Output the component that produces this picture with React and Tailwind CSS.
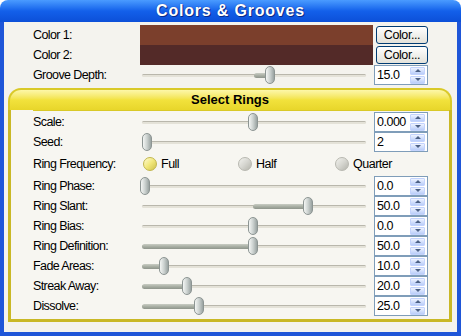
import React from "react";

const font = { fontFamily: "'Liberation Sans', Arial, sans-serif" };

const SpinBox = ({ value, className = "" }) => (
  <div
    className={`flex h-[20px] w-[54px] items-center border border-[#7f9db9] bg-white ${className}`}
  >
    <span className="flex-1 pl-[2px] text-[12.5px] leading-none tracking-[-0.5px] text-black">
      {value}
    </span>
    <div className="mr-[2px] flex flex-col gap-px">
      <div className="flex h-[8px] w-[15px] items-center justify-center rounded-[1px] border border-[#c3d3fd] bg-gradient-to-b from-[#eef3ff] to-[#b9cdf9]">
        <div className="h-0 w-0 border-x-[3px] border-b-[3px] border-x-transparent border-b-[#4d6185]" />
      </div>
      <div className="flex h-[8px] w-[15px] items-center justify-center rounded-[1px] border border-[#c3d3fd] bg-gradient-to-b from-[#eef3ff] to-[#b9cdf9]">
        <div className="h-0 w-0 border-x-[3px] border-t-[3px] border-x-transparent border-t-[#4d6185]" />
      </div>
    </div>
  </div>
);

// thumb and fill are x positions inside the 228px slider area (0 = x 140)
const Slider = ({ thumb, fillFrom }) => (
  <div className="relative h-[20px] w-[228px]">
    <div className="absolute left-[2px] right-[2px] top-[9px] h-[3px] rounded-full border-t border-[#b9b7ac] bg-[#e4e2d8]" />
    {fillFrom !== undefined && (
      <div
        className="absolute top-[8px] h-[5px] rounded-full bg-gradient-to-b from-[#c9cdc4] via-[#a9afa4] to-[#8e958c]"
        style={{ left: Math.min(fillFrom, thumb), width: Math.abs(thumb - fillFrom) }}
      />
    )}
    <div
      className="absolute top-[1px] h-[18px] w-[10px] rounded-full border border-[#8d9593] bg-gradient-to-r from-[#f4f6f4] via-[#ccd2d0] to-[#9aa3a1]"
      style={{ left: thumb - 5 }}
    />
  </div>
);

const Radio = ({ label, checked }) => (
  <div className="flex items-center gap-[4px]">
    <div
      className={`h-[14px] w-[14px] rounded-full border ${
        checked
          ? "border-[#c2b64c] bg-gradient-to-br from-[#fffbd0] via-[#f1e77a] to-[#cfc24a]"
          : "border-[#b8b8b0] bg-gradient-to-br from-[#f2f2ee] via-[#d6d6d0] to-[#b4b4ac]"
      }`}
    />
    <span className="text-[12.5px] tracking-[-0.5px] text-black">{label}</span>
  </div>
);

const Label = ({ children }) => (
  <span className="w-[107px] text-[12.5px] tracking-[-0.6px] text-black">{children}</span>
);

const Row = ({ label, children, spin }) => (
  <div className="flex h-[20px] items-center">
    <Label>{label}</Label>
    {children}
    {spin !== undefined && <SpinBox value={spin} className="ml-[6px]" />}
  </div>
);

const ColorRow = ({ label, color }) => (
  <div className="flex h-[20px] items-center">
    <Label>{label}</Label>
    <div className={`h-[20px] w-[233px] ${color}`} />
    <button className="ml-[3px] h-[18px] w-[52px] rounded-[3px] border border-[#003c74] bg-gradient-to-b from-white to-[#e3e2da] text-[12.5px] leading-none tracking-[-0.4px] text-black">
      Color...
    </button>
  </div>
);

export default function App() {
  return (
    <div className="h-[336px] w-[461px] bg-white" style={font}>
      <div className="flex h-full flex-col">
        <div className="relative flex h-[22px] items-center justify-center rounded-t-[8px] bg-gradient-to-b from-[#4a9bff] via-[#1360ea] to-[#0c4fd8]">
          <span
            className="text-[16px] font-bold tracking-[0.8px] text-white"
            style={{ textShadow: "1px 1px 0 #0b2a88, 0 0 1px #0b2a88" }}
          >
            Colors &amp; Grooves
          </span>
        </div>
        <div className="flex flex-1 flex-col border-x-4 border-b-4 border-[#1f56d8] bg-[#f4f3ee] pt-[3px]">
          <div className="pl-[29px]">
            <ColorRow label="Color 1:" color="bg-[#7b3f2c]" />
            <ColorRow label="Color 2:" color="bg-[#532a28]" />
            <Row label="Groove Depth:" spin="15.0">
              <Slider thumb={130} fillFrom={114} />
            </Row>
          </div>

          <div className="ml-[4px] mr-[5px] mt-[3px] flex flex-col">
            <div className="flex h-[22px] items-center justify-center rounded-t-[13px] border-x-2 border-t-2 border-[#d9c928] bg-gradient-to-b from-[#fdf7a8] via-[#f2e23c] to-[#e8d62a]">
              <span className="text-[13px] font-bold text-black">Select Rings</span>
            </div>
            <div className="h-[212px] border-x-[3px] border-b-[3px] border-[#c9b826] bg-[#f7f6f1] pl-[22px]">
              <div className="border-t border-[#d9c928] pt-px" />
              <Row label="Scale:" spin="0.000">
                <Slider thumb={113} />
              </Row>
              <Row label="Seed:" spin="2">
                <Slider thumb={7} />
              </Row>
              <div className="flex h-[24px] items-center">
                <Label>Ring Frequency:</Label>
                <div className="flex w-[255px] items-center">
                  <div className="w-[96px] pl-[3px]">
                    <Radio label="Full" checked />
                  </div>
                  <div className="w-[96px] pl-[2px]">
                    <Radio label="Half" />
                  </div>
                  <div className="pl-[3px]">
                    <Radio label="Quarter" />
                  </div>
                </div>
              </div>
              <Row label="Ring Phase:" spin="0.0">
                <Slider thumb={5} />
              </Row>
              <Row label="Ring Slant:" spin="50.0">
                <Slider thumb={168} fillFrom={113} />
              </Row>
              <Row label="Ring Bias:" spin="0.0">
                <Slider thumb={113} />
              </Row>
              <Row label="Ring Definition:" spin="50.0">
                <Slider thumb={113} fillFrom={2} />
              </Row>
              <Row label="Fade Areas:" spin="10.0">
                <Slider thumb={24} fillFrom={2} />
              </Row>
              <Row label="Streak Away:" spin="20.0">
                <Slider thumb={47} fillFrom={2} />
              </Row>
              <Row label="Dissolve:" spin="25.0">
                <Slider thumb={59} fillFrom={2} />
              </Row>
            </div>
          </div>
        </div>
      </div>
    </div>
  );
}
